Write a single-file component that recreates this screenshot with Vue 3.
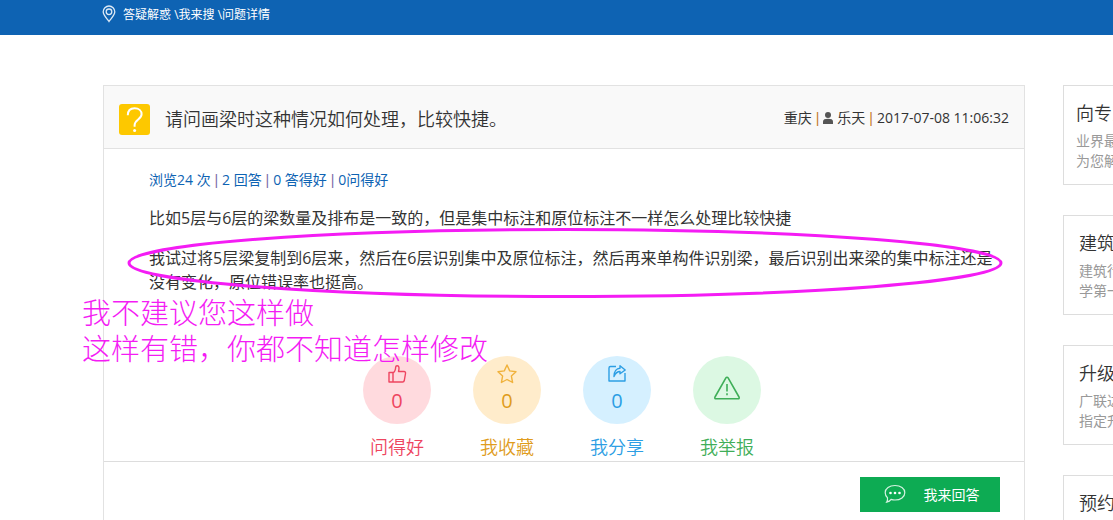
<script setup>
const stats = ['浏览24 次', '2 回答', '0 答得好', '0问得好']

const actions = [
  { key: 'like', label: '问得好', count: 0 },
  { key: 'star', label: '我收藏', count: 0 },
  { key: 'share', label: '我分享', count: 0 },
  { key: 'report', label: '我举报', count: null },
]

const services = [
  { title: '向专家', lines: ['业界最', '为您解'] },
  { title: '建筑', lines: ['建筑行', '学第一'] },
  { title: '升级', lines: ['广联达', '指定升'] },
  { title: '预约', lines: [] },
]
</script>

<template>
  <div class="page">
    <nav class="topbar">
      <svg class="pin" viewBox="0 0 14 18" width="14" height="18" aria-hidden="true">
        <path d="M7 16.5C5 13.5 1.2 10.4 1.2 6.8a5.8 5.8 0 0 1 11.6 0C12.8 10.4 9 13.5 7 16.5Z" />
        <circle cx="7" cy="6.8" r="2.8" />
      </svg>
      <span><a href="#">答疑解惑</a> \<a href="#">我来搜</a> \<a href="#">问题详情</a></span>
    </nav>

    <div class="layout">
      <main class="question">
        <header class="head">
          <svg class="badge" viewBox="0 0 31 31" width="31" height="31" aria-hidden="true">
            <rect width="31" height="31" rx="3" fill="#fdc800" />
            <path d="M8.8 11.2C8.8 6.600 11.400 4.200 15.600 4.200S22.600 6.800 22.600 10.300C22.600 15.200 15.600 15.800 15.600 21V22.800" fill="none" stroke="#fff" stroke-width="2" />
            <circle cx="15.600" cy="26.500" r="1.500" fill="#fff" />
          </svg>
          <h1>请问画梁时这种情况如何处理，比较快捷。</h1>
          <p class="meta">
            <span>重庆</span><i>|</i>
            <svg viewBox="0 0 10 12" width="10" height="12" aria-hidden="true">
              <circle cx="5" cy="3" r="3" />
              <path d="M0 12V9.500C0 7.500 2 6.800 5 6.800s5 .7 5 2.700V12Z" />
            </svg>
            <span>乐天</span><i>|</i>
            <time>2017-07-08 11:06:32</time>
          </p>
        </header>

        <section class="body">
          <p class="stats">
            <template v-for="(s, i) in stats" :key="s"><i v-if="i"> | </i>{{ s }}</template>
          </p>
          <p>比如5层与6层的梁数量及排布是一致的，但是集中标注和原位标注不一样怎么处理比较快捷</p>
          <p>我试过将5层梁复制到6层来，然后在6层识别集中及原位标注，然后再来单构件识别梁，最后识别出来梁的集中标注还是没有变化，原位错误率也挺高。</p>
        </section>

        <div class="actions">
          <button v-for="a in actions" :key="a.key" type="button" class="action" :class="a.key">
            <span class="disc">
              <svg v-if="a.key === 'like'" viewBox="0 0 20 20" width="20" height="20">
                <path d="M2 8.500h4v9.500H2ZM6 9c2.500-1.500 2.600-4 2.700-6 .1-1.800 2.800-1.700 3.200.2.300 1.500 0 3-.4 4.300H17c1.300 0 1.700.8 1.500 2l-1.200 7c-.2 1-.7 1.500-1.700 1.500H6" />
              </svg>
              <svg v-else-if="a.key === 'star'" viewBox="0 0 20 20" width="20" height="20">
                <path d="m10 1 2.700 5.900 6.300.8-4.600 4.400 1.200 6.400L10 15.500l-5.600 3 1.200-6.400L1 7.700l6.300-.8Z" />
              </svg>
              <svg v-else-if="a.key === 'share'" viewBox="0 0 20 20" width="20" height="20">
                <path d="M9 2.500H3.500C2.500 2.500 2 3 2 4V17h16V9M7 12.500C7 7.500 9.500 4.300 13 4.300V1.800L18.200 6 13 9.800V7.500C10.500 7.500 8.500 9 7 12.500Z" />
              </svg>
              <svg v-else class="warn" viewBox="0 0 28 26" width="28" height="26">
                <path d="M14 2.200c.5 0 .8.200 1.100.7L26 22c.5 1 .1 1.800-1 1.800H3c-1.100 0-1.500-.8-1-1.800L12.900 2.900c.3-.5.600-.7 1.100-.7ZM14 9V16.500M14 18.300v2" />
              </svg>
              <b v-if="a.count !== null">{{ a.count }}</b>
            </span>
            <span class="label">{{ a.label }}</span>
          </button>
        </div>

        <footer class="foot">
          <button type="button" class="answer">
            <svg viewBox="0 0 22 20" width="22" height="20" aria-hidden="true">
              <path d="M11 1.500c5.600 0 9.800 3 9.800 7.200S16.600 16 11 16c-1.400 0-2.700-.2-3.900-.6-1 1.600-2.400 2.400-4.400 2.800.8-1.200 1-2.600.8-4.500C2 12.400 1.200 10.700 1.200 8.700 1.200 4.500 5.400 1.500 11 1.500Z" />
              <circle cx="6.500" cy="9" r="1.300" /><circle cx="11" cy="9" r="1.300" /><circle cx="15.500" cy="9" r="1.300" />
            </svg>
            我来回答
          </button>
        </footer>

        <svg class="ring" viewBox="0 0 876 70" preserveAspectRatio="none" aria-hidden="true">
          <ellipse cx="438" cy="35" rx="436" ry="33.500" />
        </svg>
        <p class="note">我不建议您这样做<br />这样有错，你都不知道怎样修改</p>
      </main>

      <aside class="side">
        <section v-for="s in services" :key="s.title" class="service">
          <h2>{{ s.title }}</h2>
          <p v-for="l in s.lines" :key="l">{{ l }}</p>
        </section>
      </aside>
    </div>
  </div>
</template>

<style>
body {
  margin: 0;
  background: #fff;
}
</style>

<style scoped>
.page {
  height: 100vh;
  overflow: hidden;
  font-family: "Open Sans", "Noto Sans CJK SC", sans-serif;
  color: #333;
}
h1, h2, p {
  margin: 0;
  font-weight: 400;
}
i {
  font-family: "Liberation Sans", sans-serif;
  font-style: normal;
}
button {
  border: 0;
  padding: 0;
  background: none;
  font: inherit;
  cursor: pointer;
}
.topbar {
  display: flex;
  align-items: center;
  gap: 7px;
  height: 35px;
  padding: 0 0 7px 102px;
  box-sizing: border-box;
  background: #0e63b3;
  color: #fff;
  font-size: 12px;
}
.topbar a {
  color: inherit;
  text-decoration: none;
}
.pin {
  fill: none;
  stroke: #dce9f5;
  stroke-width: 1.3;
}
.layout {
  display: grid;
  grid-template-columns: minmax(0, 1fr) 50px;
  gap: 38px;
  padding: 50px 0 0 103px;
}
.question {
  position: relative;
  border: 1px solid #e2e2e2;
  border-bottom: 0;
}
.head {
  display: flex;
  align-items: center;
  height: 62px;
  padding: 0 15px;
  background: #f9f9f9;
  border-bottom: 1px solid #e2e2e2;
}
.badge {
  margin-top: 4px;
}
h1 {
  flex: 1;
  margin-left: 15px;
  padding-top: 4px;
  font-size: 18px;
  font-weight: 350;
  line-height: 26px;
}
.meta {
  display: flex;
  align-items: center;
  gap: 4px;
  padding-top: 2px;
  font-size: 14px;
  line-height: 20px;
}
.meta svg {
  fill: #555;
}
.meta i {
  color: #c47a2c;
}
.body {
  padding: 19px 24px 0 45px;
  font-size: 16px;
  line-height: 24px;
}
.body p {
  margin-bottom: 16px;
}
.body .stats {
  margin-bottom: 14px;
  font-size: 14px;
  color: #0e63b3;
}
.stats i {
  color: #7c6aa8;
}
.actions {
  display: flex;
  justify-content: center;
  padding: 46px 4px 0 0;
  border-bottom: 1px solid #ddd;
}
.action {
  display: flex;
  flex-direction: column;
  align-items: center;
  width: 110px;
}
.disc {
  display: flex;
  flex-direction: column;
  align-items: center;
  justify-content: center;
  width: 68px;
  height: 68px;
  border-radius: 50%;
}
.disc svg {
  fill: none;
  stroke: currentColor;
  stroke-width: 1.4;
  stroke-linejoin: round;
}
.disc .warn {
  margin-bottom: 4px;
  stroke-width: 1.6;
}
.disc b {
  margin-top: 2px;
  font-size: 20px;
  font-weight: 400;
  line-height: 30px;
}
.label {
  margin-top: 10px;
  font-size: 18px;
  font-weight: 350;
  line-height: 27px;
}
.like { color: #ee4560; }
.like .disc { background: #ffdade; }
.star { color: #e09c1c; }
.star .disc { background: #ffeccb; }
.star svg { color: #f0b23c; }
.share { color: #2c9ee4; }
.share .disc { background: #d5f0ff; }
.report { color: #3fae58; }
.report .disc { background: #dcf8e3; }
.foot {
  display: flex;
  justify-content: flex-end;
  padding: 15px 24px 40px;
}
.answer {
  display: flex;
  align-items: center;
  justify-content: center;
  gap: 18px;
  width: 140px;
  height: 35px;
  padding: 0 0 2px 3px;
  background: #0dab53;
  color: #fff;
  font-size: 14px;
}
.answer path {
  fill: none;
  stroke: #d5f2e1;
  stroke-width: 1.2;
}
.answer circle {
  fill: #fff;
}
.ring {
  position: absolute;
  left: 23px;
  top: 142px;
  width: calc(100% - 44px);
  height: 70px;
  fill: none;
  stroke: #f41cf4;
  stroke-width: 3;
  pointer-events: none;
}
.note {
  position: absolute;
  left: -22px;
  top: 207px;
  color: #f41cf4;
  font-family: "Noto Sans CJK SC", sans-serif;
  font-size: 29px;
  font-weight: 300;
  line-height: 36px;
  white-space: nowrap;
  pointer-events: none;
}
.side {
  overflow: hidden;
}
.service {
  width: 240px;
  height: 100px;
  margin-bottom: 30px;
  padding: 14px 15px 0;
  box-sizing: border-box;
  border: 1px solid #ddd;
}
.service:first-child {
  padding-left: 12px;
}
.service h2 {
  margin-bottom: 5px;
  font-size: 18px;
  font-weight: 350;
  line-height: 26px;
}
.service p {
  font-size: 14px;
  line-height: 20px;
  color: #999;
}
</style>
